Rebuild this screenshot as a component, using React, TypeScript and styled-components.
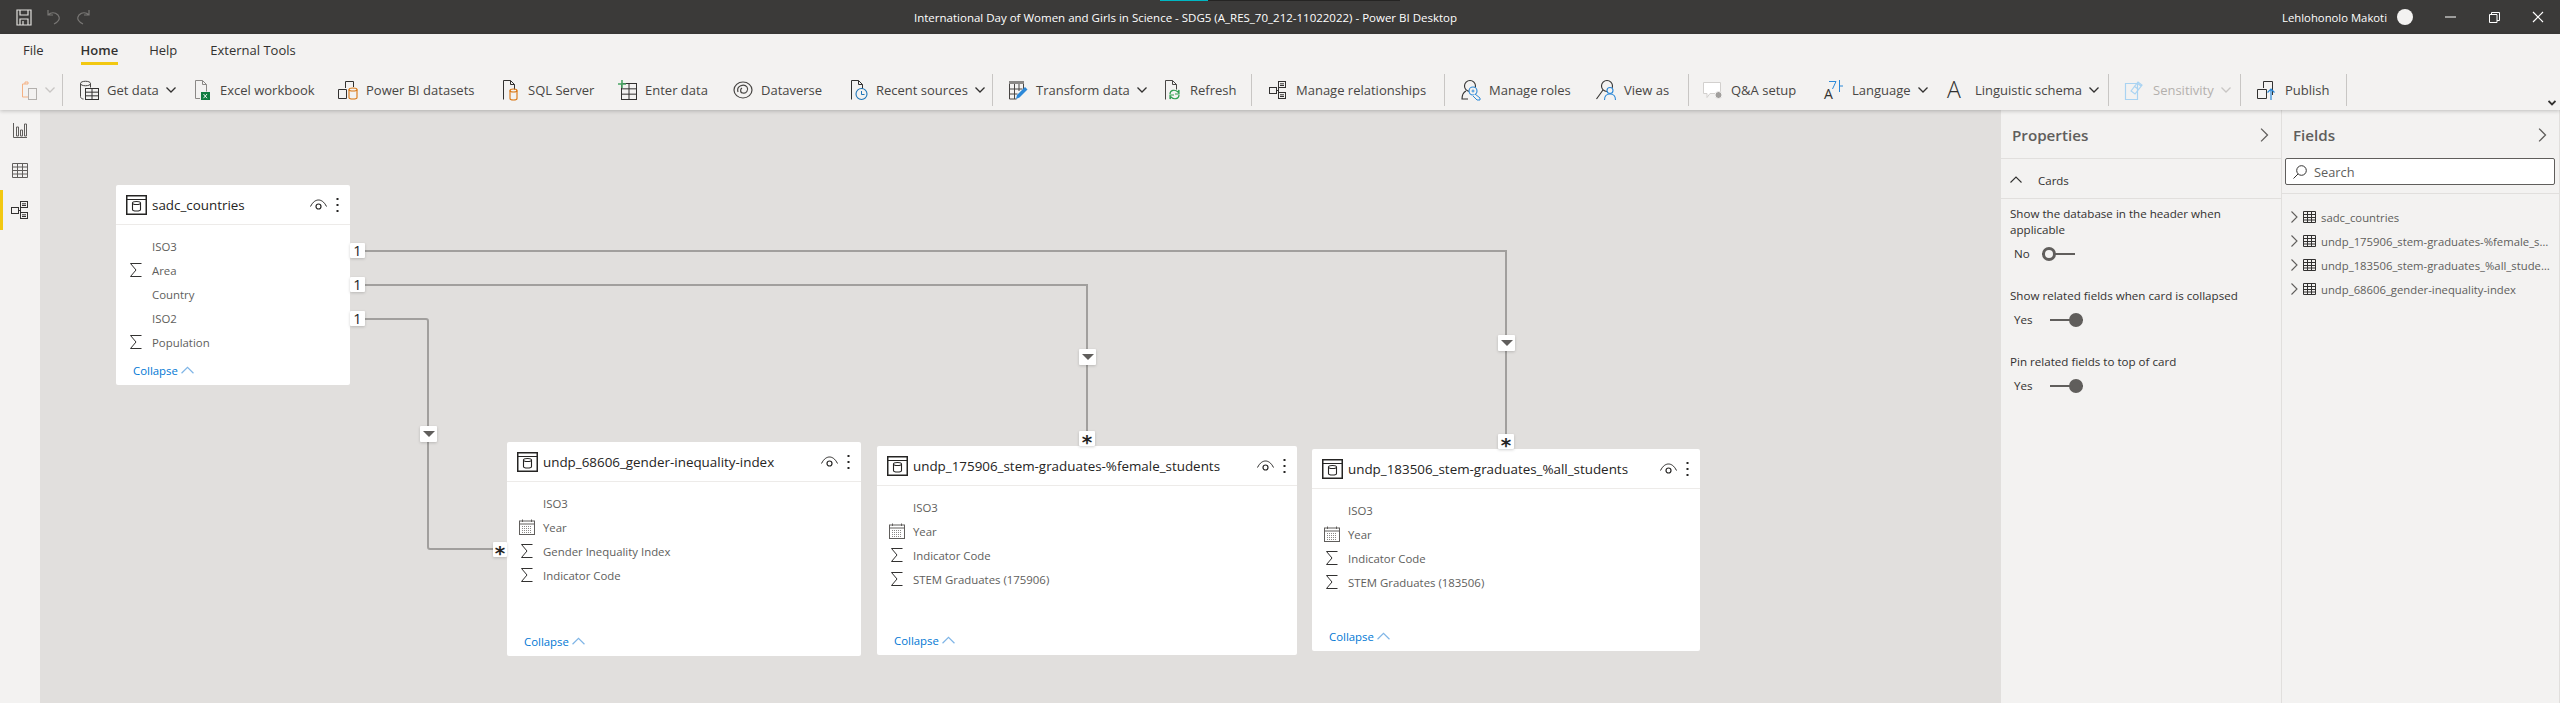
import React from 'react';
import styled, { createGlobalStyle } from 'styled-components';

const GlobalStyle = createGlobalStyle`
  html, body { margin: 0; padding: 0; overflow: hidden; background: #f3f2f1; }
  body { font-family: "Open Sans", "Noto Sans", "Liberation Sans", sans-serif; }
  *, *::before, *::after { box-sizing: border-box; }
`;

const Page = styled.div`
  width: 2560px;
  height: 703px;
  display: flex;
  flex-direction: column;
  overflow: hidden;
`;

/* title bar */
const TitleBar = styled.div`
  height: 34px;
  flex: none;
  position: relative;
  display: flex;
  align-items: center;
  background: #3b3a39;
  color: #fff;
`;
const ProgressLine = styled.div`
  position: absolute;
  left: 1160px;
  top: 0;
  width: 240px;
  height: 1px;
  background: linear-gradient(to right, #00b7c3 0 48px, #252423 48px);
`;
const QuickAccess = styled.div`
  width: 914px;
  flex: none;
  display: flex;
  align-items: center;
  gap: 15px;
  padding-left: 16px;
`;
const WindowTitle = styled.div`
  width: 546px;
  flex: none;
  font-size: 11.5px;
  white-space: nowrap;
`;
const UserZone = styled.div`
  margin-left: auto;
  display: flex;
  align-items: center;
  font-size: 11.3px;
`;
const Avatar = styled.div`
  width: 16px;
  height: 16px;
  margin: 0 15px 0 10px;
  border-radius: 50%;
  background: #f3f2f1;
`;
const WindowButton = styled.div`
  width: 44px;
  height: 34px;
  display: flex;
  align-items: center;
  justify-content: center;
`;

/* ribbon */
const Ribbon = styled.div`
  height: 76px;
  flex: none;
  position: relative;
  z-index: 3;
  background: #f3f2f1;
  box-shadow: 0 1px 4px rgba(0, 0, 0, 0.22);
`;
const TabRow = styled.div`
  height: 32px;
  display: flex;
  align-items: flex-start;
  padding: 6px 0 0 23px;
  gap: 31px;
`;
const Tab = styled.div<{ $active?: boolean; $after?: number }>`
  height: 25px;
  margin-right: ${p => p.$after ?? 0}px;
  font-size: 13px;
  line-height: 20px;
  color: #323130;
  font-weight: ${p => (p.$active ? 600 : 400)};
  border-bottom: 3px solid ${p => (p.$active ? '#f2c811' : 'transparent')};
`;
const Toolbar = styled.div`
  height: 32px;
  margin-top: 8px;
  display: flex;
  align-items: center;
  padding-left: 20px;
`;
const ToolButton = styled.div<{ $w: number; $off?: boolean }>`
  width: ${p => p.$w}px;
  flex: none;
  display: flex;
  align-items: center;
  gap: 10px;
  font-size: 13px;
  white-space: nowrap;
  color: ${p => (p.$off ? '#b3b0ad' : '#484644')};
`;
const ToolIcon = styled.svg`
  width: 20px;
  height: 20px;
  flex: none;
  margin-right: -2px;
  overflow: visible;
`;
const Caret = styled.svg<{ $off?: boolean }>`
  width: 10px;
  height: 6px;
  flex: none;
  margin-left: -3px;
  fill: none;
  stroke: ${p => (p.$off ? '#c8c6c4' : '#323130')};
  stroke-width: 1.3;
`;
const ToolDivider = styled.div<{ $after?: number }>`
  width: 1px;
  height: 32px;
  flex: none;
  background: #c8c6c4;
  margin-right: ${p => p.$after ?? 16}px;
`;
const RibbonCollapse = styled.svg`
  position: absolute;
  right: 4px;
  bottom: 4px;
  width: 8px;
  height: 6px;
  fill: none;
  stroke: #323130;
  stroke-width: 1.8;
`;

/* body */
const Body = styled.div`
  flex: 1;
  min-height: 0;
  display: flex;
`;
const Rail = styled.div`
  width: 40px;
  flex: none;
  background: #f3f2f1;
`;
const RailItem = styled.div<{ $active?: boolean }>`
  height: 40px;
  display: flex;
  align-items: center;
  justify-content: center;
  border-left: 3px solid ${p => (p.$active ? '#f2c811' : 'transparent')};
  padding-right: 3px;
`;
const Canvas = styled.div`
  flex: 1;
  position: relative;
  background: #e1dfdd;
`;
const Lines = styled.svg`
  position: absolute;
  inset: 0;
  width: 100%;
  height: 100%;
`;

/* table cards */
const Card = styled.div<{ $x: number; $y: number; $w: number; $h: number }>`
  position: absolute;
  left: ${p => p.$x}px;
  top: ${p => p.$y}px;
  width: ${p => p.$w}px;
  height: ${p => p.$h}px;
  display: flex;
  flex-direction: column;
  background: #fff;
  border-radius: 2px;
`;
const CardHead = styled.div`
  height: 40px;
  flex: none;
  display: flex;
  align-items: center;
  padding: 0 10px;
  border-bottom: 1px solid #edebe9;
`;
const CardTitle = styled.div`
  flex: 1;
  margin-left: 5px;
  font-size: 13.4px;
  font-weight: 500;
  color: #252423;
  white-space: nowrap;
`;
const CardRows = styled.div`
  padding: 9px 0 0 12px;
`;
const CardRow = styled.div`
  height: 24px;
  display: flex;
  align-items: center;
  gap: 8px;
  font-size: 11.4px;
  color: #605e5c;
`;
const RowIcon = styled.svg`
  width: 16px;
  height: 16px;
  flex: none;
`;
const Collapse = styled.div`
  margin-top: auto;
  height: 30px;
  padding-left: 17px;
  display: flex;
  align-items: center;
  gap: 3px;
  font-size: 11.4px;
  color: #0078d4;
`;
const Marker = styled.div<{ $x: number; $y: number; $w?: number; $h?: number }>`
  position: absolute;
  left: ${p => p.$x}px;
  top: ${p => p.$y}px;
  width: ${p => p.$w ?? 15}px;
  height: ${p => p.$h ?? 15}px;
  display: flex;
  align-items: center;
  justify-content: center;
  background: #fff;
  border-radius: 1px;
  box-shadow: 0 1px 3px rgba(0, 0, 0, 0.18);
  color: #252423;
  font-size: 14.5px;
  line-height: 15px;
`;
const Star = styled.span`
  font-family: "DejaVu Sans", sans-serif;
  font-size: 20px;
  font-weight: 700;
  line-height: 15px;
  padding-top: 7px;
`;
const FilterArrow = styled.div`
  width: 0;
  height: 0;
  border-left: 6.5px solid transparent;
  border-right: 6.5px solid transparent;
  border-top: 6px solid #605e5c;
`;

/* side panes */
const Pane = styled.div<{ $w: number }>`
  width: ${p => p.$w}px;
  flex: none;
  background: #f3f2f1;
  border-right: 1px solid #e1dfdd;
`;
const PaneHead = styled.div`
  height: 48px;
  display: flex;
  align-items: center;
  justify-content: space-between;
  padding: 2px 10px 0 11px;
  font-size: 15.2px;
  font-weight: 600;
  color: #605e5c;
`;
const Section = styled.div`
  height: 41px;
  display: flex;
  align-items: center;
  gap: 16px;
  padding: 3px 0 0 9px;
  font-size: 11.5px;
  color: #323130;
  border-top: 1px solid #e1dfdd;
  border-bottom: 1px solid #e1dfdd;
`;
const Setting = styled.div<{ $h: number }>`
  padding: 7px 9px 0;
  height: ${p => p.$h}px;
  font-size: 11.6px;
  line-height: 16px;
  color: #323130;
`;
const ToggleRow = styled.div`
  margin-top: 8px;
  padding-left: 4px;
  height: 16px;
  display: flex;
  align-items: center;
  font-size: 11.6px;
`;
const ToggleLabel = styled.div`
  width: 28px;
`;
const Toggle = styled.div<{ $on?: boolean }>`
  position: relative;
  width: 33px;
  height: 2px;
  margin-left: ${p => (p.$on ? 8 : 0)}px;
  background: #605e5c;
  &::after {
    content: '';
    position: absolute;
    top: -6px;
    ${p => (p.$on ? 'right: 0;' : 'left: 0;')}
    width: 14px;
    height: 14px;
    border-radius: 50%;
    border: 3px solid #605e5c;
    background: ${p => (p.$on ? '#605e5c' : '#f3f2f1')};
  }
`;
const SearchBox = styled.div`
  height: 27px;
  margin: 0 4px 0 3px;
  display: flex;
  align-items: center;
  gap: 7px;
  padding-left: 7px;
  background: #fff;
  border: 1px solid #605e5c;
  border-radius: 2px;
  font-size: 12.8px;
  color: #605e5c;
`;
const FieldList = styled.div`
  margin-top: 8px;
  padding: 11px 7px 0 6px;
  border-top: 1px solid #e1dfdd;
`;
const FieldItem = styled.div`
  height: 24px;
  display: flex;
  align-items: center;
  gap: 3px;
  font-size: 11.3px;
  color: #605e5c;
`;
const FieldName = styled.div`
  min-width: 0;
  flex: 1;
  margin-left: 2px;
  white-space: nowrap;
  overflow: hidden;
  text-overflow: ellipsis;
`;

/* little drawings */
const Chevron = ({ size = 12, dir = 'right', color = '#605e5c' }: { size?: number; dir?: 'right' | 'up'; color?: string }) => (
  <svg width={size} height={size} viewBox="0 0 12 12" fill="none" stroke={color} strokeWidth="1.1" style={{ flex: 'none' }}>
    {dir === 'right' ? <path d="M3.5 .5 9 6l-5.5 5.5" /> : <path d="M.5 8.5 6 3l5.5 5.5" />}
  </svg>
);

const Table = ({ x = 0, y = 0, w = 13, h = 11, color = '#323130' }) => (
  <g fill="none" stroke={color} strokeWidth="1">
    <rect x={x + 0.5} y={y + 0.5} width={w} height={h} />
    <path d={`M${x + w / 2 + 0.5} ${y + 0.5}v${h}M${x + 0.5} ${y + h / 3 + 0.5}h${w}M${x + 0.5} ${y + (2 * h) / 3 + 0.5}h${w}`} />
  </g>
);

const Cylinder = ({ x = 0, y = 0, w = 7, h = 10, color = '#d9730d' }) => (
  <g fill="none" stroke={color} strokeWidth="1.1">
    <ellipse cx={x + w / 2} cy={y + 1.5} rx={w / 2} ry={1.5} />
    <path d={`M${x} ${y + 1.5}v${h - 3}c0 2 ${w} 2 ${w} 0v${-(h - 3)}`} />
  </g>
);

const Doc = ({ color = '#484644' }) => (
  <path d="M3.5 19.5v-19h7l4 4v5M10.5 .5v4h4" fill="none" stroke={color} strokeWidth="1" />
);

const icons: Record<string, React.ReactNode> = {
  clipboard: (
    <g fill="none" strokeWidth="1">
      <path d="M8 4H2.5v13H8" stroke="#f4b183" />
      <path d="M5 4V2h3v2" stroke="#f4b183" />
      <rect x="8.5" y="8.5" width="8" height="11" stroke="#b3b0ad" />
    </g>
  ),
  getData: (
    <>
      <path d="M11.5 3.5c0-3-10-3-10 0v13c0 1.5 1.5 2.5 3 2.5M1.5 3.5c0 3 10 3 10 0v4" fill="none" stroke="#484644" strokeWidth="1" />
      <Table x={6} y={8} w={13} h={11} />
    </>
  ),
  excel: (
    <>
      <path d="M8 18.5H3.5v-18h7l4 4v7M10.5 .5v4h4" fill="none" stroke="#8a8886" strokeWidth="1" />
      <rect x="9" y="12" width="9" height="8" fill="#107c41" />
      <path d="m11.500 14 3.500 4.200m0-4.200-3.500 4.200" stroke="#fff" strokeWidth=".9" />
    </>
  ),
  dataset: (
    <>
      <path d="M7.5 8V1.5h8V7M.5 9.5h8v9h-8z" fill="none" stroke="#323130" strokeWidth="1" />
      <Cylinder x={11} y={8} w={8} h={11} />
    </>
  ),
  sql: (
    <>
      <Doc color="#323130" />
      <Cylinder x={10} y={9} w={7} h={11} />
    </>
  ),
  enterData: (
    <>
      <Table x={4} y={3} w={15} h={16} />
      <path d="M5 0v8M1 4h8" stroke="#4aa564" strokeWidth="1.6" fill="none" />
    </>
  ),
  dataverse: (
    <g fill="none" stroke="#484644" strokeWidth="1.2">
      <ellipse cx="10" cy="10" rx="9" ry="8" />
      <path d="M5 12c-2-6 6-9 9-5 2 3-1 7-4 6-3 0-3-4-1-5" />
    </g>
  ),
  recent: (
    <>
      <Doc color="#323130" />
      <circle cx="13.5" cy="14" r="5.5" fill="#f3f2f1" stroke="#1d75b8" strokeWidth="1.1" />
      <path d="M13.5 11v3.500h3" fill="none" stroke="#1d75b8" strokeWidth="1" />
    </>
  ),
  transform: (
    <>
      <rect x="1" y="1" width="15" height="3" fill="#8a8886" />
      <path d="M1.5 4v15h7M15.5 4v6M1.5 9h13M1.5 14h8M6.500 4v15M11 4v7" fill="none" stroke="#484644" strokeWidth="1" />
      <path d="m8 19 1-4 8-8 2.500 2.500-8 8z" fill="#2b88d8" />
    </>
  ),
  refresh: (
    <>
      <Doc color="#484644" />
      <path d="M8 14c0-4 5-5 8-2l1-2v4h-4M17 15c0 4-5 5-8 2l-1 2v-4h4" fill="#f3f2f1" stroke="#2e9e4f" strokeWidth="1.2" />
    </>
  ),
  relations: (
    <g fill="none" stroke="#323130" strokeWidth="1">
      <rect x="1.5" y="7.5" width="7" height="6" />
      <rect x="10.5" y="1.5" width="7" height="6" />
      <rect x="10.5" y="12.5" width="7" height="6" />
      <path d="M8.5 10.5h2M10.5 5v9M12 3.800h4M12 5.500h4M12 14.800h4M12 16.500h4" />
    </g>
  ),
  roles: (
    <>
      <g fill="none" stroke="#323130" strokeWidth="1.1">
        <circle cx="9" cy="6" r="5.5" />
        <path d="M5 11c-2 1-4 4-4 8h6" />
      </g>
      <circle cx="12" cy="11" r="4" fill="#f3f2f1" stroke="#2b88d8" strokeWidth="1.1" />
      <path d="M14 14l5 4v2h-3l-4-4" fill="#f3f2f1" stroke="#2b88d8" strokeWidth="1" />
      <path d="M10.5 11h3M12 9.500v3" stroke="#2b88d8" strokeWidth=".9" />
    </>
  ),
  viewAs: (
    <>
      <circle cx="11" cy="6" r="5.5" fill="none" stroke="#323130" strokeWidth="1.1" />
      <path d="M7 10 .5 19" stroke="#323130" strokeWidth="1.1" />
      <circle cx="14" cy="10.5" r="3" fill="#f3f2f1" stroke="#2b88d8" strokeWidth="1.1" />
      <path d="M8.5 20c0-4 2.500-6 5.500-6s5.500 2 5.500 6" fill="none" stroke="#2b88d8" strokeWidth="1.1" />
    </>
  ),
  qa: (
    <>
      <path d="M.5 2.5h17v11H7l-3 4v-4H.5z" fill="#fff" stroke="#d2d0ce" strokeWidth="1" />
      <circle cx="15.5" cy="15" r="3.5" fill="#a19f9d" stroke="#f3f2f1" />
    </>
  ),
  language: (
    <>
      <text x="0" y="19" fontSize="14" fill="#323130" fontFamily='"Open Sans", sans-serif'>A</text>
      <path d="M5 1.5h7L8.5 9M15.5 0v12M15.500 6H19" fill="none" stroke="#2b88d8" strokeWidth="1" />
    </>
  ),
  schema: (
    <text x="0" y="18" fontSize="23" fill="#323130" fontFamily='"Open Sans", sans-serif' fontWeight="300">A</text>
  ),
  sensitivity: (
    <g fill="none" stroke="#a9d3f2" strokeWidth="1.2">
      <path d="M.5 3.5h12v16H.5z" />
      <path d="m6 11 7-9 4 3-7 9zM9 6l4 3M12 3l4 3" />
    </g>
  ),
  publish: (
    <>
      <path d="M6.5 8V1.5h9V15M.5 9.5h9v9h-9z" fill="none" stroke="#323130" strokeWidth="1" />
      <path d="M14 20V9M10.500 12.500 14 9l3.500 3.500" fill="none" stroke="#2b88d8" strokeWidth="1.2" />
    </>
  ),
};

const ToolGlyph = ({ name }: { name: string }) => <ToolIcon viewBox="0 0 20 20">{icons[name]}</ToolIcon>;

const CaretIcon = ({ off }: { off?: boolean }) => (
  <Caret $off={off} viewBox="0 0 10 6">
    <path d="M.5 .5 5 5 9.5 .5" />
  </Caret>
);

const TableCardIcon = () => (
  <svg width="21" height="20" viewBox="0 0 21 20" style={{ flex: 'none' }} fill="none" stroke="#252423">
    <rect x=".75" y=".75" width="19.5" height="18.5" strokeWidth="1.5" />
    <path d="M1 4.5h19" strokeWidth="1" />
    <ellipse cx="10.5" cy="8" rx="4" ry="1.5" strokeWidth="1.1" />
    <path d="M6.5 8v6.500c0 2 8 2 8 0V8" strokeWidth="1.1" />
  </svg>
);

const EyeIcon = () => (
  <svg width="17" height="12" viewBox="0 0 17 12" fill="none" stroke="#252423" strokeWidth="1" style={{ flex: 'none', marginRight: 9 }}>
    <path d="M.5 7.5C3 2.500 6 1 8.500 1s5.500 1.500 8 6.500" />
    <circle cx="8.5" cy="7.5" r="2.5" strokeWidth="1.2" />
  </svg>
);

const MoreIcon = () => (
  <svg width="3" height="14" viewBox="0 0 3 14" fill="#252423" style={{ flex: 'none', marginRight: 1 }}>
    <rect x=".5" width="2" height="2" />
    <rect x=".5" y="6" width="2" height="2" />
    <rect x=".5" y="12" width="2" height="2" />
  </svg>
);

const SigmaIcon = () => (
  <RowIcon viewBox="0 0 16 16">
    <path d="M13.5 1.5h-11L8 8l-5.500 6.500h11" fill="none" stroke="#323130" strokeWidth="1" />
  </RowIcon>
);

const CalendarIcon = () => (
  <RowIcon viewBox="0 0 16 16">
    <rect x=".5" y="2" width="15" height="13.5" fill="none" stroke="#605e5c" strokeWidth="1" />
    <path d="M.5 5h15M3.500 .5V3M12.500 .5V3" stroke="#605e5c" strokeWidth="1" />
    <path d="M3 7.500h10M3 9.500h10M3 11.500h10M3 13.500h10" stroke="#8a8886" strokeWidth="1" strokeDasharray="1 1" />
  </RowIcon>
);

type FieldKind = 'none' | 'sum' | 'date';
type TableCard = {
  name: string;
  x: number;
  y: number;
  w: number;
  h: number;
  fields: [FieldKind, string][];
};

// canvas starts at 40,110 in the window
const cards: TableCard[] = [
  {
    name: 'sadc_countries', x: 76, y: 75, w: 234, h: 200,
    fields: [['none', 'ISO3'], ['sum', 'Area'], ['none', 'Country'], ['none', 'ISO2'], ['sum', 'Population']],
  },
  {
    name: 'undp_68606_gender-inequality-index', x: 467, y: 332, w: 354, h: 214,
    fields: [['none', 'ISO3'], ['date', 'Year'], ['sum', 'Gender Inequality Index'], ['sum', 'Indicator Code']],
  },
  {
    name: 'undp_175906_stem-graduates-%female_students', x: 837, y: 336, w: 420, h: 209,
    fields: [['none', 'ISO3'], ['date', 'Year'], ['sum', 'Indicator Code'], ['sum', 'STEM Graduates (175906)']],
  },
  {
    name: 'undp_183506_stem-graduates_%all_students', x: 1272, y: 339, w: 388, h: 202,
    fields: [['none', 'ISO3'], ['date', 'Year'], ['sum', 'Indicator Code'], ['sum', 'STEM Graduates (183506)']],
  },
];

const oneMarkers = [133, 167, 201];
const starMarkers = [
  { x: 453, y: 432 },
  { x: 1039, y: 321 },
  { x: 1458, y: 324 },
];
const filterMarkers = [
  { x: 380, y: 316 },
  { x: 1039, y: 239 },
  { x: 1458, y: 225 },
];

const tools: (
  | { kind: 'btn'; icon: string; label: string; w: number; caret?: boolean; off?: boolean }
  | { kind: 'div'; after?: number }
)[] = [
  { kind: 'btn', icon: 'clipboard', label: '', w: 42, caret: true, off: true },
  { kind: 'div' },
  { kind: 'btn', icon: 'getData', label: 'Get data', w: 113, caret: true },
  { kind: 'btn', icon: 'excel', label: 'Excel workbook', w: 146 },
  { kind: 'btn', icon: 'dataset', label: 'Power BI datasets', w: 162 },
  { kind: 'btn', icon: 'sql', label: 'SQL Server', w: 117 },
  { kind: 'btn', icon: 'enterData', label: 'Enter data', w: 116 },
  { kind: 'btn', icon: 'dataverse', label: 'Dataverse', w: 115 },
  { kind: 'btn', icon: 'recent', label: 'Recent sources', w: 144, caret: true },
  { kind: 'div', after: 15 },
  { kind: 'btn', icon: 'transform', label: 'Transform data', w: 154, caret: true },
  { kind: 'btn', icon: 'refresh', label: 'Refresh', w: 89 },
  { kind: 'div' },
  { kind: 'btn', icon: 'relations', label: 'Manage relationships', w: 176 },
  { kind: 'div' },
  { kind: 'btn', icon: 'roles', label: 'Manage roles', w: 135 },
  { kind: 'btn', icon: 'viewAs', label: 'View as', w: 92 },
  { kind: 'div', after: 14 },
  { kind: 'btn', icon: 'qa', label: 'Q&A setup', w: 121 },
  { kind: 'btn', icon: 'language', label: 'Language', w: 123, caret: true },
  { kind: 'btn', icon: 'schema', label: 'Linguistic schema', w: 161, caret: true },
  { kind: 'div' },
  { kind: 'btn', icon: 'sensitivity', label: 'Sensitivity', w: 115, caret: true, off: true },
  { kind: 'div' },
  { kind: 'btn', icon: 'publish', label: 'Publish', w: 89 },
  { kind: 'div' },
];

const fieldTables = [
  'sadc_countries',
  'undp_175906_stem-graduates-%female_students',
  'undp_183506_stem-graduates_%all_students',
  'undp_68606_gender-inequality-index',
];

const Titlebar = () => (
  <TitleBar>
    <ProgressLine />
    <QuickAccess>
      <svg width="16" height="17" viewBox="0 0 16 17" fill="none" stroke="#e1dfdd" strokeWidth="1.2">
        <path d="M1 1h14v15H1zM4 1v5h8V1M4 16v-6h8v6M7 12v4" />
      </svg>
      <svg width="14" height="16" viewBox="0 0 14 16" fill="none" stroke="#797775" strokeWidth="1.2">
        <path d="M1 1v5h5M1 6c3-3 7-3 10 0 3 4 0 7-4 9" />
      </svg>
      <svg width="14" height="16" viewBox="0 0 14 16" fill="none" stroke="#797775" strokeWidth="1.2">
        <path d="M13 1v5H8M13 6c-3-3-7-3-10 0-3 4 0 7 4 9" />
      </svg>
    </QuickAccess>
    <WindowTitle>International Day of Women and Girls in Science - SDG5 (A_RES_70_212-11022022) - Power BI Desktop</WindowTitle>
    <UserZone>
      Lehlohonolo Makoti
      <Avatar />
      <WindowButton>
        <svg width="11" height="2"><path d="M0 1h11" stroke="#fff" /></svg>
      </WindowButton>
      <WindowButton>
        <svg width="11" height="11" fill="none" stroke="#fff"><path d="M.5 2.5h7.5v8H.5zM2.500 2.500V.5h8v8H8" /></svg>
      </WindowButton>
      <WindowButton>
        <svg width="12" height="12" fill="none" stroke="#fff" strokeWidth="1.2"><path d="m1 1 10 10M11 1 1 11" /></svg>
      </WindowButton>
    </UserZone>
  </TitleBar>
);

const Toolstrip = () => (
  <Toolbar>
    {tools.map((t, i) =>
      t.kind === 'div' ? (
        <ToolDivider key={i} $after={t.after} />
      ) : (
        <ToolButton key={i} $w={t.w} $off={t.off}>
          <ToolGlyph name={t.icon} />
          {t.label && <span>{t.label}</span>}
          {t.caret && <CaretIcon off={t.off} />}
        </ToolButton>
      ),
    )}
  </Toolbar>
);

const ModelCanvas = () => (
  <Canvas>
    <Lines fill="none" stroke="#a19f9d" strokeWidth="2">
      <path d="M310 141H1466V339" />
      <path d="M310 175H1047V336" />
      <path d="M310 209H386a2 2 0 0 1 2 2V437a2 2 0 0 0 2 2H467" />
    </Lines>
    {cards.map(c => (
      <Card key={c.name} $x={c.x} $y={c.y} $w={c.w} $h={c.h}>
        <CardHead>
          <TableCardIcon />
          <CardTitle>{c.name}</CardTitle>
          <EyeIcon />
          <MoreIcon />
        </CardHead>
        <CardRows>
          {c.fields.map(([kind, label]) => (
            <CardRow key={label}>
              {kind === 'sum' ? <SigmaIcon /> : kind === 'date' ? <CalendarIcon /> : <RowIcon />}
              {label}
            </CardRow>
          ))}
        </CardRows>
        <Collapse>
          Collapse <Chevron size={13} dir="up" color="#7fb5e6" />
        </Collapse>
      </Card>
    ))}
    {oneMarkers.map(y => (
      <Marker key={y} $x={310} $y={y} $h={15}>1</Marker>
    ))}
    {starMarkers.map(m => (
      <Marker key={m.x} $x={m.x} $y={m.y} $w={m.x === 453 ? 14 : 16}><Star>*</Star></Marker>
    ))}
    {filterMarkers.map(m => (
      <Marker key={m.x} $x={m.x} $y={m.y} $w={17} $h={16}><FilterArrow /></Marker>
    ))}
  </Canvas>
);

const PropertiesPane = () => (
  <Pane $w={281}>
    <PaneHead>
      Properties
      <Chevron size={14} />
    </PaneHead>
    <Section>
      <Chevron size={12} dir="up" color="#323130" />
      Cards
    </Section>
    <Setting $h={82}>
      Show the database in the header when applicable
      <ToggleRow>
        <ToggleLabel>No</ToggleLabel>
        <Toggle />
      </ToggleRow>
    </Setting>
    <Setting $h={66}>
      Show related fields when card is collapsed
      <ToggleRow>
        <ToggleLabel>Yes</ToggleLabel>
        <Toggle $on />
      </ToggleRow>
    </Setting>
    <Setting $h={66}>
      Pin related fields to top of card
      <ToggleRow>
        <ToggleLabel>Yes</ToggleLabel>
        <Toggle $on />
      </ToggleRow>
    </Setting>
  </Pane>
);

const FieldsPane = () => (
  <Pane $w={278}>
    <PaneHead>
      Fields
      <Chevron size={14} />
    </PaneHead>
    <SearchBox>
      <svg width="14" height="14" viewBox="0 0 14 14" fill="none" stroke="#323130" strokeWidth="1">
        <circle cx="8.5" cy="5.5" r="4.8" />
        <path d="M5 9 .5 13.500" />
      </svg>
      Search
    </SearchBox>
    <FieldList>
      {fieldTables.map(name => (
        <FieldItem key={name}>
          <Chevron size={12} />
          <svg width="13" height="12" viewBox="0 0 13 12" style={{ flex: 'none' }} fill="none" stroke="#323130">
            <path d="M.5 .5h12v11H.5zM.5 3.500h12M.5 6.500h12M.5 9h12M4.500 .5v11M8.500 .5v11" />
          </svg>
          <FieldName>{name}</FieldName>
        </FieldItem>
      ))}
    </FieldList>
  </Pane>
);

export default function App() {
  return (
    <Page>
      <GlobalStyle />
      <Titlebar />
      <Ribbon>
        <TabRow>
          <Tab $after={6}>File</Tab>
          <Tab $active>Home</Tab>
          <Tab $after={2}>Help</Tab>
          <Tab>External Tools</Tab>
        </TabRow>
        <Toolstrip />
        <RibbonCollapse viewBox="0 0 8 6">
          <path d="M.5 1 4 4.500 7.500 1" />
        </RibbonCollapse>
      </Ribbon>
      <Body>
        <Rail>
          <RailItem>
            <svg width="14" height="15" viewBox="0 0 14 15" fill="none" stroke="#605e5c">
              <path d="M.5 0v14.500H14M3.500 4h2v9h-2zM7.500 7h2v6h-2zM11.500 1h2v12h-2z" />
            </svg>
          </RailItem>
          <RailItem>
            <svg width="16" height="15" viewBox="0 0 16 15" fill="none" stroke="#605e5c">
              <path d="M.5 .5h15v14H.5zM.5 4h15M.5 7.500h15M.5 11h15M5.500 .5v14M10.500 .5v14" />
            </svg>
          </RailItem>
          <RailItem $active>
            <svg width="20" height="20" viewBox="0 0 20 20">{icons.relations}</svg>
          </RailItem>
        </Rail>
        <ModelCanvas />
        <PropertiesPane />
        <FieldsPane />
      </Body>
    </Page>
  );
}
